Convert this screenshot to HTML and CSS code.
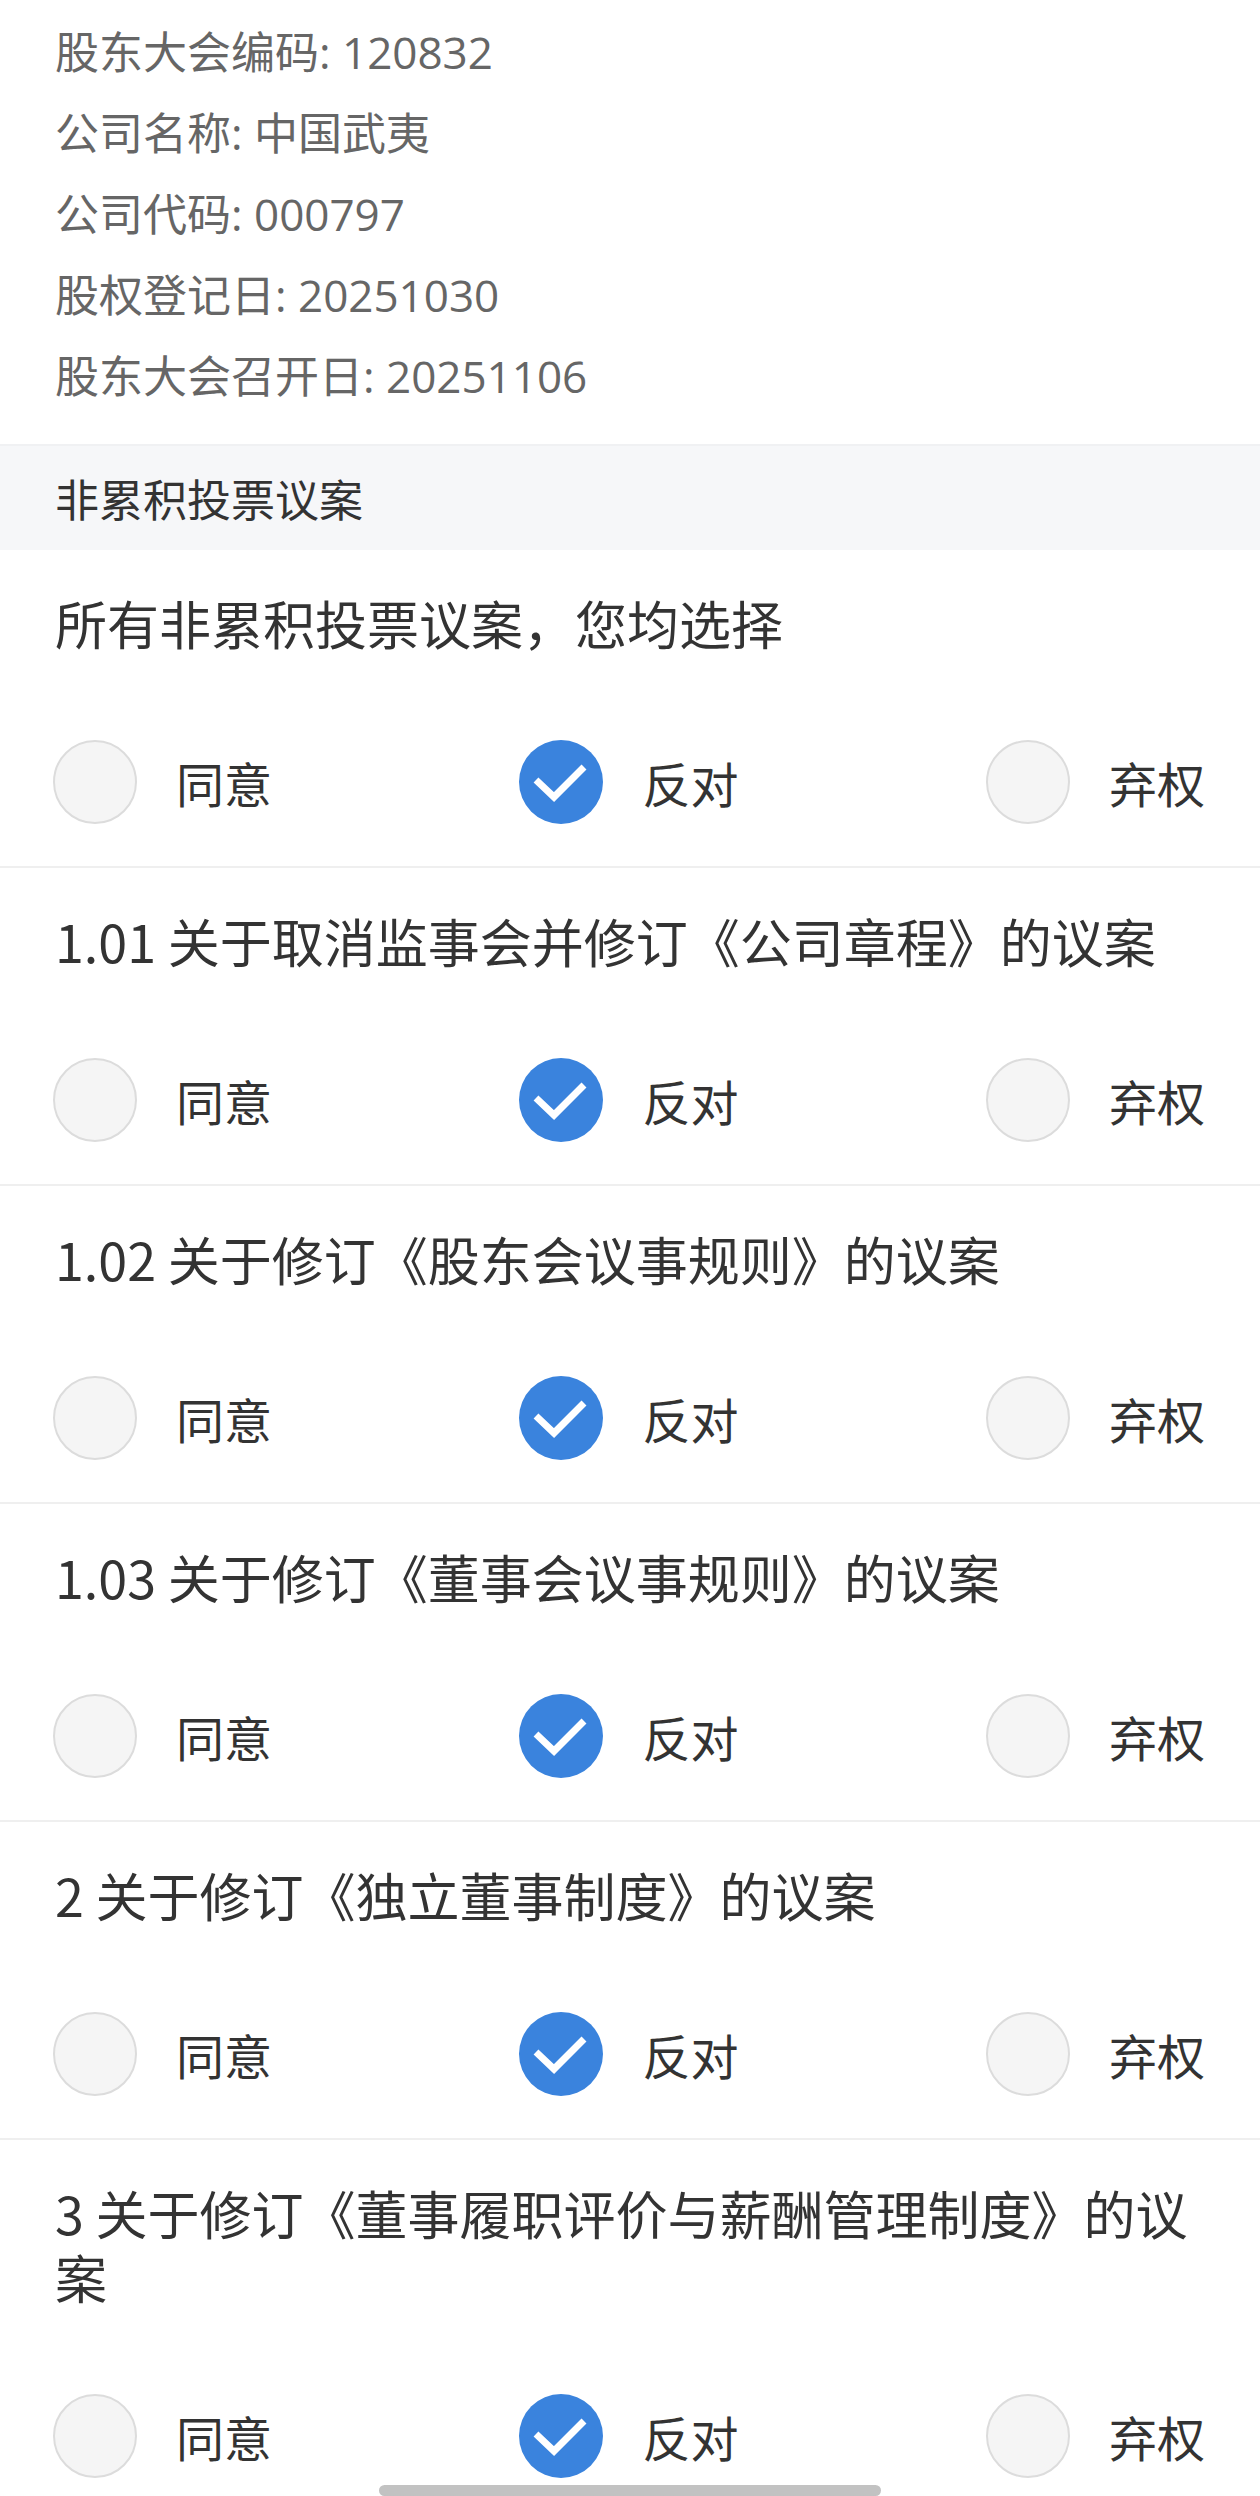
FILE: index.html
```html
<!DOCTYPE html>
<html lang="zh-CN">
<head>
<meta charset="utf-8">
<title>股东大会投票</title>
<link rel="stylesheet" href="styles.css">
</head>
<body>
<div class="page">
  <section class="info">
    <div class="info-line">股东大会编码: 120832</div>
    <div class="info-line">公司名称: 中国武夷</div>
    <div class="info-line">公司代码: 000797</div>
    <div class="info-line">股权登记日: 20251030</div>
    <div class="info-line">股东大会召开日: 20251106</div>
  </section>

  <div class="section-header">非累积投票议案</div>

  <div class="item">
    <div class="item-title">所有非累积投票议案，您均选择</div>
    <div class="options">
      <div class="option"><span class="radio"></span><span class="label">同意</span></div>
      <div class="option"><span class="radio checked"><svg viewBox="0 0 84 84" width="84" height="84"><path d="M17 40 L35 57 L65 27" fill="none" stroke="#fff" stroke-width="7"/></svg></span><span class="label">反对</span></div>
      <div class="option"><span class="radio"></span><span class="label">弃权</span></div>
    </div>
  </div>

  <div class="item">
    <div class="item-title">1.01 关于取消监事会并修订《公司章程》的议案</div>
    <div class="options">
      <div class="option"><span class="radio"></span><span class="label">同意</span></div>
      <div class="option"><span class="radio checked"><svg viewBox="0 0 84 84" width="84" height="84"><path d="M17 40 L35 57 L65 27" fill="none" stroke="#fff" stroke-width="7"/></svg></span><span class="label">反对</span></div>
      <div class="option"><span class="radio"></span><span class="label">弃权</span></div>
    </div>
  </div>

  <div class="item">
    <div class="item-title">1.02 关于修订《股东会议事规则》的议案</div>
    <div class="options">
      <div class="option"><span class="radio"></span><span class="label">同意</span></div>
      <div class="option"><span class="radio checked"><svg viewBox="0 0 84 84" width="84" height="84"><path d="M17 40 L35 57 L65 27" fill="none" stroke="#fff" stroke-width="7"/></svg></span><span class="label">反对</span></div>
      <div class="option"><span class="radio"></span><span class="label">弃权</span></div>
    </div>
  </div>

  <div class="item">
    <div class="item-title">1.03 关于修订《董事会议事规则》的议案</div>
    <div class="options">
      <div class="option"><span class="radio"></span><span class="label">同意</span></div>
      <div class="option"><span class="radio checked"><svg viewBox="0 0 84 84" width="84" height="84"><path d="M17 40 L35 57 L65 27" fill="none" stroke="#fff" stroke-width="7"/></svg></span><span class="label">反对</span></div>
      <div class="option"><span class="radio"></span><span class="label">弃权</span></div>
    </div>
  </div>

  <div class="item">
    <div class="item-title">2 关于修订《独立董事制度》的议案</div>
    <div class="options">
      <div class="option"><span class="radio"></span><span class="label">同意</span></div>
      <div class="option"><span class="radio checked"><svg viewBox="0 0 84 84" width="84" height="84"><path d="M17 40 L35 57 L65 27" fill="none" stroke="#fff" stroke-width="7"/></svg></span><span class="label">反对</span></div>
      <div class="option"><span class="radio"></span><span class="label">弃权</span></div>
    </div>
  </div>

  <div class="item">
    <div class="item-title">3 关于修订《董事履职评价与薪酬管理制度》的议案</div>
    <div class="options">
      <div class="option"><span class="radio"></span><span class="label">同意</span></div>
      <div class="option"><span class="radio checked"><svg viewBox="0 0 84 84" width="84" height="84"><path d="M17 40 L35 57 L65 27" fill="none" stroke="#fff" stroke-width="7"/></svg></span><span class="label">反对</span></div>
      <div class="option"><span class="radio"></span><span class="label">弃权</span></div>
    </div>
  </div>
</div>
<div class="home-indicator"></div>
</body>
</html>
```

FILE: styles.css
```css
html, body {
  margin: 0;
  padding: 0;
  background: #ffffff;
}
body {
  width: 1260px;
  height: 2496px;
  overflow: hidden;
  font-family: "Noto Sans CJK SC", "Noto Sans", sans-serif;
  color: #333333;
}
.page {
  display: flex;
  flex-direction: column;
}
.info {
  padding: 12px 55px 27px;
}
.info-line {
  font-family: "Open Sans", "Noto Sans CJK SC", sans-serif;
  font-size: 44px;
  line-height: 81px;
  color: #666666;
  white-space: nowrap;
}
.section-header {
  height: 106px;
  box-sizing: border-box;
  border-top: 2px solid #f0f1f3;
  background: #f6f7f9;
  padding: 0 55px;
  display: flex;
  align-items: center;
  font-size: 44px;
  color: #333333;
}
.item {
  padding: 41px 0 42px;
  border-bottom: 2px solid #efefef;
}
.item-title {
  padding: 0 55px;
  font-size: 52px;
  line-height: 64px;
  color: #333333;
}
.options {
  margin-top: 85px;
  padding: 0 55px 0 53px;
  display: flex;
  justify-content: space-between;
  align-items: center;
}
.option {
  display: flex;
  align-items: center;
  gap: 39px;
}
.radio {
  width: 84px;
  height: 84px;
  box-sizing: border-box;
  border-radius: 50%;
  border: 2px solid #dcdcdc;
  background: #f5f5f5;
  display: block;
  flex: none;
}
.radio.checked {
  border: none;
  background: #3a83dd;
}
.radio svg {
  display: block;
}
.label {
  font-size: 48px;
  line-height: 64px;
  color: #333333;
}
.home-indicator {
  position: fixed;
  left: 379px;
  bottom: 0;
  width: 502px;
  height: 11px;
  border-radius: 6px;
  background: #c2c2c2;
}
```
